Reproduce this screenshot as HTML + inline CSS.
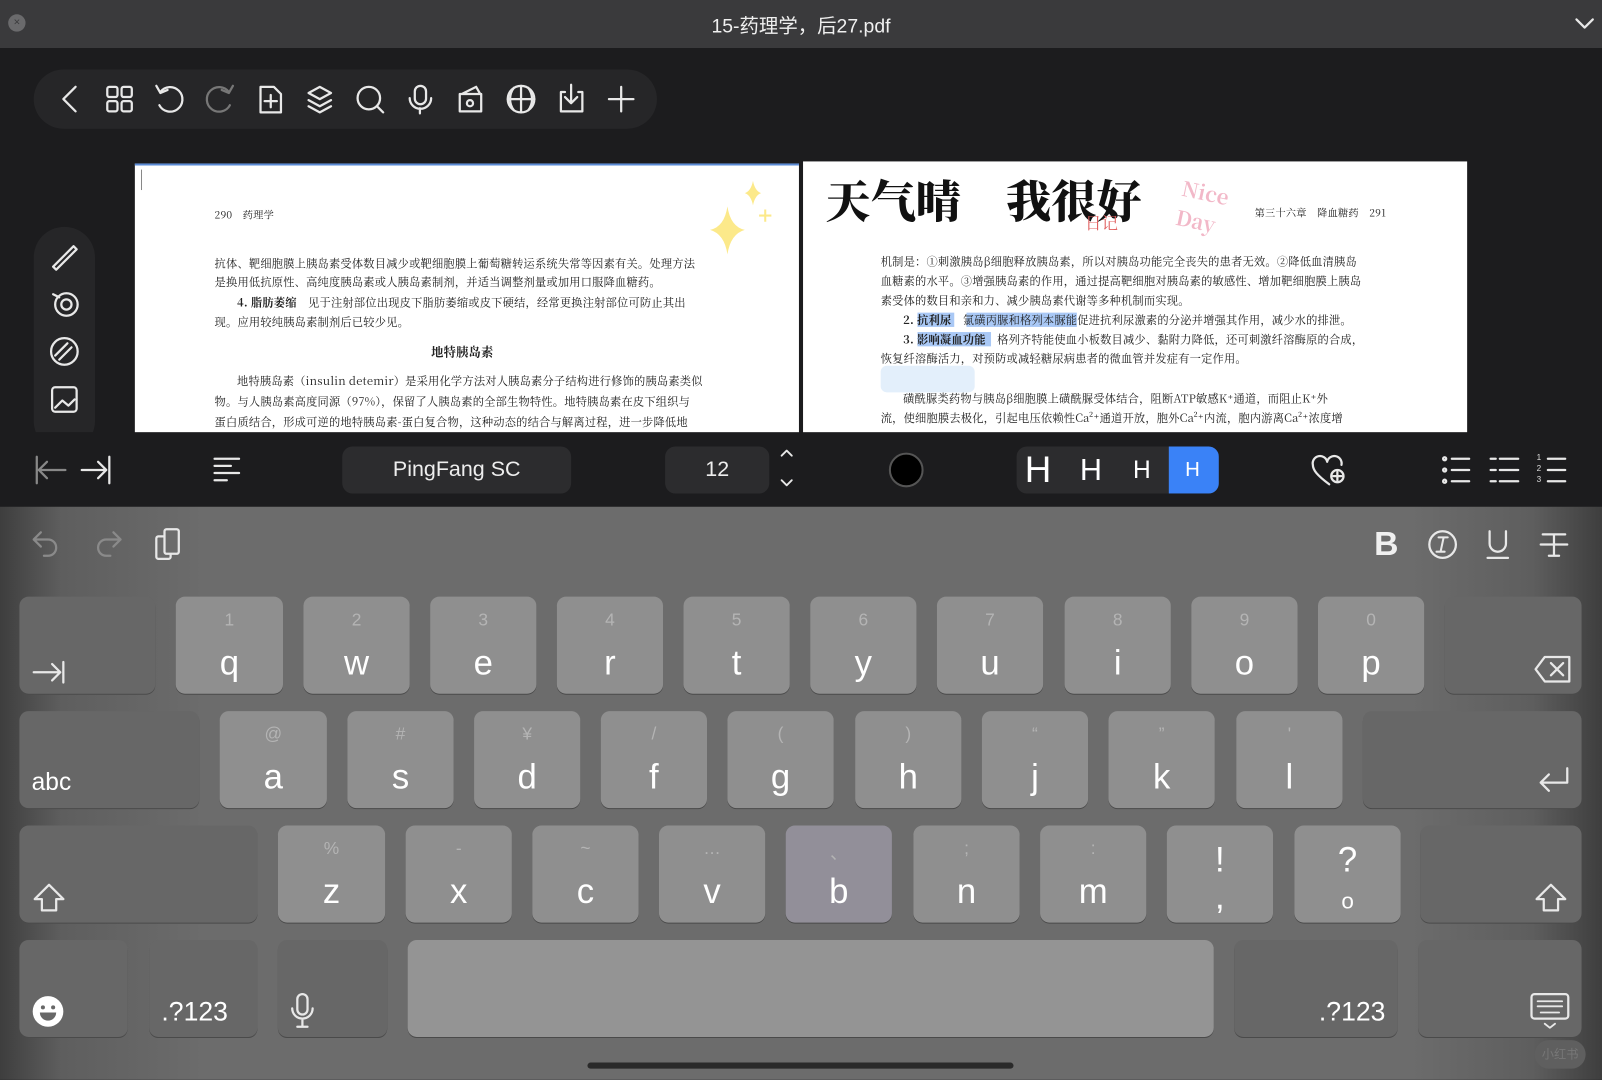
<!DOCTYPE html>
<html><head><meta charset="utf-8"><style>
*{margin:0;padding:0;box-sizing:border-box}
html,body{width:1602px;height:1080px;overflow:hidden;background:#1c1c1e}
#w{position:absolute;left:0;top:0;width:1568px;height:1057px;transform:scale(1.02168);transform-origin:0 0;font-family:"Liberation Sans","Noto Sans CJK SC",sans-serif;color:#fff;background:#1c1c1e;overflow:hidden}
.a{position:absolute}
svg{position:absolute;overflow:visible}
.ic{stroke:#e8e8e8;fill:none;stroke-width:2.2;stroke-linecap:round;stroke-linejoin:round}
.page{position:absolute;background:#fff;color:#222;font-family:"Noto Serif CJK SC","Liberation Serif",serif;font-size:11px;overflow:hidden}
.page p{position:absolute;white-space:nowrap;letter-spacing:0.2px}
.k{position:absolute;border-radius:9px;background:#8f8f8f;box-shadow:0 1px 0 #4a4a4a;text-align:center}
.s{background:#676767}
.k .m{position:absolute;left:0;right:0;top:45px;font-size:34px;line-height:40px}
.k .d{position:absolute;left:0;right:0;top:13px;font-size:17px;color:#b4b4b4}
</style></head><body><div id="w">
<div class="a" style="left:0;top:0;width:1568px;height:47px;background:#3a3a3c"></div>
<div class="a" style="left:8px;top:14px;width:17px;height:17px;border-radius:50%;background:#6a6a6c;color:#3a3a3c;font-size:11px;text-align:center;line-height:17px">×</div>
<div class="a" style="left:0;width:1568px;top:11px;text-align:center;font-size:19px;color:#f0f0f0">15-药理学，后27.pdf</div>
<svg style="left:1542px;top:17px" width="18" height="12"><path d="M1 2 L9 10 L17 2" class="ic"/></svg>
<div class="a" style="left:33px;top:68px;width:610px;height:58px;border-radius:29px;background:#262628"></div>
<svg style="left:0;top:0" width="700" height="140" class="ic">
<path d="M74 85 L62 97 L74 109"/>
<rect x="105" y="85" width="10" height="10" rx="2"/><rect x="119" y="85" width="10" height="10" rx="2"/><rect x="105" y="99" width="10" height="10" rx="2"/><rect x="119" y="99" width="10" height="10" rx="2"/>
<path d="M157 90 A12 12 0 1 1 156 103"/><path d="M153 84 L157 91 L164 88"/>
<path d="M224 90 A12 12 0 1 0 225 103" stroke="#777"/><path d="M228 84 L224 91 L217 88" stroke="#777"/>
<path d="M255 85 h13 l7 7 v18 h-20 z"/><path d="M265 93 v12 M259 99 h12"/>
<path d="M302 91 l11 -6 l11 6 l-11 6 z"/><path d="M302 98 l11 6 l11 -6"/><path d="M302 104 l11 6 l11 -6"/>
<circle cx="361" cy="96" r="11"/><path d="M369 104 l6 6"/>
<rect x="406" y="84" width="11" height="18" rx="5.5"/><path d="M401 96 a10 10 0 0 0 21 0 M411 106 v5"/>
<path d="M450 92 h21 v17 h-21 z M452 92 l14 -7 l4 7"/><circle cx="460" cy="101" r="3"/>
<circle cx="510" cy="97" r="13"/><path d="M497 97 h26 M510 84 v26 M503 86 a18 18 0 0 0 0 22 M517 86 a18 18 0 0 1 0 22"/>
<path d="M553 90 h-4 v19 h21 v-19 h-4 M559 83 v17 M553 95 l6 6 l6 -6"/>
<path d="M608 85 v24 M596 97 h24"/>
</svg>
<div class="a" style="left:33px;top:222px;width:60px;height:220px;border-radius:30px;background:#262628"></div>
<svg style="left:0;top:0" width="100" height="430" class="ic">
<path d="M52 261 L72 241 L75 244 L55 264 Z"/>
<circle cx="65" cy="298" r="11"/><circle cx="65" cy="298" r="5"/><path d="M52 288 l6 3"/>
<circle cx="63" cy="344" r="13"/><path d="M54 348 l12 -12 M58 352 l12 -12"/>
<rect x="51" y="379" width="24" height="24" rx="3"/><path d="M54 399 l7 -7 l6 5 l6 -6"/>
</svg>
<div class="page" style="left:132px;top:160px;width:650px;height:270px;border-top:2px solid #5b8bd6">
<div class="a" style="left:6px;top:4px;width:1px;height:20px;background:#888"></div>
<p style="left:78px;top:40px;font-size:10px">290　药理学</p>
<svg style="left:555px;top:15px" width="80" height="80"><path d="M25 25 Q28 45 42 48 Q28 52 25 72 Q22 52 8 48 Q22 45 25 25Z" fill="#fce98a"/><path d="M50 0 Q52 10 58 12 Q52 14 50 24 Q48 14 42 12 Q48 10 50 0Z" fill="#fce98a"/><path d="M62 28 v12 M56 34 h12" stroke="#fce98a" stroke-width="2"/></svg>
<p style="left:78px;top:88px">抗体、靶细胞膜上胰岛素受体数目减少或靶细胞膜上葡萄糖转运系统失常等因素有关。处理方法</p>
<p style="left:78px;top:106px">是换用低抗原性、高纯度胰岛素或人胰岛素制剂，并适当调整剂量或加用口服降血糖药。</p>
<p style="left:100px;top:126px"><b>4. 脂肪萎缩</b>　见于注射部位出现皮下脂肪萎缩或皮下硬结，经常更换注射部位可防止其出</p>
<p style="left:78px;top:145px">现。应用较纯胰岛素制剂后已较少见。</p>
<p style="left:290px;top:174px;font-size:12px;font-weight:bold">地特胰岛素</p>
<p style="left:100px;top:203px">地特胰岛素（insulin detemir）是采用化学方法对人胰岛素分子结构进行修饰的胰岛素类似</p>
<p style="left:78px;top:223px">物。与人胰岛素高度同源（97%），保留了人胰岛素的全部生物特性。地特胰岛素在皮下组织与</p>
<p style="left:78px;top:243px">蛋白质结合，形成可逆的地特胰岛素-蛋白复合物，这种动态的结合与解离过程，进一步降低地</p>
</div>
<div class="page" style="left:786px;top:158px;width:650px;height:270px">
<p style="left:22px;top:4px;font-size:44px;font-family:'Noto Serif CJK SC',serif;font-weight:900;color:#111">天气晴　我很好</p>
<p style="left:276px;top:48px;font-size:16px;color:#e06060">日记</p>
<p style="left:368px;top:15px;font-size:20px;color:#f2b8c8;font-weight:bold;transform:rotate(12deg)">Nice<br>Day</p>
<p style="left:442px;top:42px;font-size:10px">第三十六章　降血糖药　291</p>
<p style="left:76px;top:90px">机制是：①刺激胰岛β细胞释放胰岛素，所以对胰岛功能完全丧失的患者无效。②降低血清胰岛</p>
<p style="left:76px;top:109px">血糖素的水平。③增强胰岛素的作用，通过提高靶细胞对胰岛素的敏感性、增加靶细胞膜上胰岛</p>
<p style="left:76px;top:128px">素受体的数目和亲和力、减少胰岛素代谢等多种机制而实现。</p>
<div class="a" style="left:112px;top:148px;width:36px;height:14px;background:#a9c8f5"></div>
<div class="a" style="left:160px;top:148px;width:108px;height:14px;background:#a9c8f5"></div>
<p style="left:98px;top:147px"><b>2. 抗利尿</b>　氯磺丙脲和格列本脲能促进抗利尿激素的分泌并增强其作用，减少水的排泄。</p>
<div class="a" style="left:112px;top:167px;width:72px;height:14px;background:#a9c8f5"></div>
<p style="left:98px;top:166px"><b>3. 影响凝血功能</b>　格列齐特能使血小板数目减少、黏附力降低，还可刺激纤溶酶原的合成，</p>
<p style="left:76px;top:185px">恢复纤溶酶活力，对预防或减轻糖尿病患者的微血管并发症有一定作用。</p>
<div class="a" style="left:76px;top:200px;width:92px;height:26px;background:#e3effb;border-radius:6px"></div>
<p style="left:98px;top:224px">磺酰脲类药物与胰岛β细胞膜上磺酰脲受体结合，阻断ATP敏感K⁺通道，而阻止K⁺外</p>
<p style="left:76px;top:243px">流，使细胞膜去极化，引起电压依赖性Ca²⁺通道开放，胞外Ca²⁺内流，胞内游离Ca²⁺浓度增</p>
</div>
<div class="a" style="left:0;top:423px;width:1568px;height:73px;background:#1c1c1e"></div>
<svg style="left:0;top:0" width="1568" height="500" class="ic">
<path d="M36 447 v26 M38 460 h26 M46 452 l-8 8 l8 8" stroke="#888"/>
<path d="M107 447 v26 M80 460 h24 M96 452 l8 8 l-8 8"/>
<path d="M210 449 h24 M210 456 h16 M210 463 h24 M210 470 h12"/>
<path d="M765 446 l5 -5 l5 5 M765 470 l5 5 l5 -5" stroke-width="1.8"/>
<path d="M1301 474 c-12 -9 -16 -14 -16 -19 a7 7 0 0 1 14 -3 a7 7 0 0 1 14 3"/><circle cx="1309" cy="466" r="6"/><path d="M1309 462 v8 M1305 466 h8"/>
<g><circle cx="1414" cy="449" r="1.5"/><circle cx="1414" cy="460" r="1.5"/><circle cx="1414" cy="471" r="1.5"/><path d="M1421 449 h17 M1421 460 h17 M1421 471 h17"/></g>
<g><path d="M1459 449 h5 M1459 460 h5 M1459 471 h5 M1468 449 h18 M1468 460 h18 M1468 471 h18"/></g>
<g><path d="M1515 449 h17 M1515 460 h17 M1515 471 h17"/></g>
</svg>
<div class="a" style="left:1504px;top:442px;font-size:8px;line-height:11px;color:#ddd">1<br>2<br>3</div>
<div class="a" style="left:335px;top:437px;width:224px;height:46px;border-radius:10px;background:#2c2c2e;text-align:center;line-height:46px;font-size:21px;color:#eee">PingFang SC</div>
<div class="a" style="left:651px;top:437px;width:102px;height:46px;border-radius:10px;background:#2c2c2e;text-align:center;line-height:46px;font-size:21px;color:#eee">12</div>
<div class="a" style="left:870px;top:443px;width:34px;height:34px;border-radius:50%;background:#000;border:2px solid #555"></div>
<div class="a" style="left:995px;top:437px;width:198px;height:46px;border-radius:10px;background:#2c2c2e;overflow:hidden">
<div class="a" style="left:149px;top:0;width:49px;height:46px;background:#3a82f7"></div>
<div class="a" style="left:8px;top:3px;font-size:36px;line-height:40px">H</div>
<div class="a" style="left:62px;top:6px;font-size:30px;line-height:36px">H</div>
<div class="a" style="left:114px;top:9px;font-size:24px;line-height:30px">H</div>
<div class="a" style="left:165px;top:11px;font-size:20px;line-height:24px">H</div>
</div>
<div class="a" style="left:0;top:496px;width:1568px;height:561px;background:linear-gradient(90deg,#3e3e3e 0,#5e5e5e 60px,#6c6c6c 200px,#6c6c6c 1380px,#5e5e5e 1500px,#3e3e3e 1568px)"></div>
<svg style="left:0;top:0" width="1568" height="560" class="ic">
<path d="M40 521 l-7 7 l7 7 M33 528 h14 a8 8 0 0 1 0 16 h-4" stroke="#8a8a8a"/>
<path d="M111 521 l7 7 l-7 7 M118 528 h-14 a8 8 0 0 0 0 16 h4" stroke="#8a8a8a"/>
<rect x="153" y="525" width="14" height="22" rx="2" fill="#6c6c6c"/><rect x="161" y="518" width="14" height="24" rx="2" fill="#6c6c6c"/>
<circle cx="1412" cy="533" r="13"/><path d="M1408 526 h9 M1413 526 l-3 14 M1406 540 h8" stroke-width="2"/>
<path d="M1458 520 v12 a8 8 0 0 0 16 0 v-12 M1456 546 h20"/>
<path d="M1510 523 h22 M1521 523 v21 M1516 544 h10 M1508 533 h26"/>
</svg>
<div class="a" style="left:1345px;top:513px;font-size:33px;font-weight:bold;color:#f0f0f0">B</div>

<div class="k s" style="left:19px;top:584px;width:133px;height:95px"><svg style="left:12px;top:62px" width="34" height="24" class="ic"><path d="M2 12 h26 M20 4 l8 8 l-8 8 M31 2 v20"/></svg></div>
<div class="k" style="left:172px;top:584px;width:105px;height:95px"><div class="d">1</div><div class="m">q</div></div>
<div class="k" style="left:297px;top:584px;width:104px;height:95px"><div class="d">2</div><div class="m">w</div></div>
<div class="k" style="left:421px;top:584px;width:104px;height:95px"><div class="d">3</div><div class="m">e</div></div>
<div class="k" style="left:545px;top:584px;width:104px;height:95px"><div class="d">4</div><div class="m">r</div></div>
<div class="k" style="left:669px;top:584px;width:104px;height:95px"><div class="d">5</div><div class="m">t</div></div>
<div class="k" style="left:793px;top:584px;width:104px;height:95px"><div class="d">6</div><div class="m">y</div></div>
<div class="k" style="left:917px;top:584px;width:104px;height:95px"><div class="d">7</div><div class="m">u</div></div>
<div class="k" style="left:1042px;top:584px;width:104px;height:95px"><div class="d">8</div><div class="m">i</div></div>
<div class="k" style="left:1166px;top:584px;width:104px;height:95px"><div class="d">9</div><div class="m">o</div></div>
<div class="k" style="left:1290px;top:584px;width:104px;height:95px"><div class="d">0</div><div class="m">p</div></div>
<div class="k s" style="left:1414px;top:584px;width:134px;height:95px"><svg style="left:88px;top:58px" width="36" height="26" class="ic"><path d="M10 1 h24 v24 h-24 l-9 -12 z M16 7 l12 12 M28 7 l-12 12"/></svg></div>

<div class="k s" style="left:19px;top:696px;width:176px;height:95px"><div class="a" style="left:12px;top:56px;font-size:24px">abc</div></div>
<div class="k" style="left:215px;top:696px;width:105px;height:95px"><div class="d">@</div><div class="m">a</div></div>
<div class="k" style="left:340px;top:696px;width:104px;height:95px"><div class="d">#</div><div class="m">s</div></div>
<div class="k" style="left:464px;top:696px;width:104px;height:95px"><div class="d">¥</div><div class="m">d</div></div>
<div class="k" style="left:588px;top:696px;width:104px;height:95px"><div class="d">/</div><div class="m">f</div></div>
<div class="k" style="left:712px;top:696px;width:104px;height:95px"><div class="d">(</div><div class="m">g</div></div>
<div class="k" style="left:837px;top:696px;width:104px;height:95px"><div class="d">)</div><div class="m">h</div></div>
<div class="k" style="left:961px;top:696px;width:104px;height:95px"><div class="d">“</div><div class="m">j</div></div>
<div class="k" style="left:1085px;top:696px;width:104px;height:95px"><div class="d">”</div><div class="m">k</div></div>
<div class="k" style="left:1210px;top:696px;width:104px;height:95px"><div class="d">'</div><div class="m">l</div></div>
<div class="k s" style="left:1334px;top:696px;width:214px;height:95px"><svg style="left:170px;top:54px" width="34" height="30" class="ic"><path d="M30 2 v14 h-26 M12 8 l-8 8 l8 8"/></svg></div>

<div class="k s" style="left:19px;top:808px;width:233px;height:95px"><svg style="left:13px;top:56px" width="32" height="30" class="ic"><path d="M16 2 l14 14 h-7 v11 h-14 v-11 h-7 z"/></svg></div>
<div class="k" style="left:272px;top:808px;width:105px;height:95px"><div class="d">%</div><div class="m">z</div></div>
<div class="k" style="left:397px;top:808px;width:104px;height:95px"><div class="d">-</div><div class="m">x</div></div>
<div class="k" style="left:521px;top:808px;width:104px;height:95px"><div class="d">~</div><div class="m">c</div></div>
<div class="k" style="left:645px;top:808px;width:104px;height:95px"><div class="d">…</div><div class="m">v</div></div>
<div class="k" style="left:769px;top:808px;width:104px;height:95px;background:#928f99"><div class="d">、</div><div class="m">b</div></div>
<div class="k" style="left:894px;top:808px;width:104px;height:95px"><div class="d">;</div><div class="m">n</div></div>
<div class="k" style="left:1018px;top:808px;width:104px;height:95px"><div class="d">:</div><div class="m">m</div></div>
<div class="k" style="left:1142px;top:808px;width:104px;height:95px"><div class="a" style="left:0;right:0;top:16px;font-size:34px;line-height:36px">!<br>,</div></div>
<div class="k" style="left:1267px;top:808px;width:104px;height:95px"><div class="a" style="left:0;right:0;top:16px;font-size:34px;line-height:36px">?<br><span style="font-size:22px">o</span></div></div>
<div class="k s" style="left:1390px;top:808px;width:158px;height:95px"><svg style="left:112px;top:56px" width="32" height="30" class="ic"><path d="M16 2 l14 14 h-7 v11 h-14 v-11 h-7 z"/></svg></div>

<div class="k s" style="left:19px;top:920px;width:106px;height:95px"><svg style="left:12px;top:54px" width="32" height="32"><circle cx="16" cy="16" r="15" fill="#fff"/><circle cx="11" cy="12" r="2" fill="#676767"/><circle cx="21" cy="12" r="2" fill="#676767"/><path d="M8 17 h16 a8 8 0 0 1 -16 0z" fill="#676767"/></svg></div>
<div class="k s" style="left:146px;top:920px;width:106px;height:95px"><div class="a" style="left:12px;top:55px;font-size:26px">.?123</div></div>
<div class="k s" style="left:272px;top:920px;width:107px;height:95px"><svg style="left:12px;top:52px" width="26" height="36" class="ic"><rect x="7" y="1" width="10" height="20" rx="5"/><path d="M2 15 a10 10 0 0 0 20 0 M12 25 v8 M7 33 h10"/></svg></div>
<div class="k" style="left:399px;top:920px;width:789px;height:95px;background:#949494"></div>
<div class="k s" style="left:1208px;top:920px;width:160px;height:95px"><div class="a" style="right:12px;top:55px;font-size:26px">.?123</div></div>
<div class="k s" style="left:1388px;top:920px;width:160px;height:95px"><svg style="left:110px;top:52px" width="38" height="36" class="ic"><rect x="1" y="1" width="36" height="24" rx="3"/><path d="M7 8 h24 M7 13 h24 M10 19 h18 M14 30 l5 4 l5 -4" stroke-width="1.8"/></svg></div>
<div class="a" style="left:1502px;top:1018px;width:50px;height:28px;border-radius:14px;background:#5f5f5f;color:#777;font-size:12px;text-align:center;line-height:28px">小红书</div>
<div class="a" style="left:575px;top:1040px;width:417px;height:6px;border-radius:3px;background:#2a2a2a"></div>
</div></body></html>
